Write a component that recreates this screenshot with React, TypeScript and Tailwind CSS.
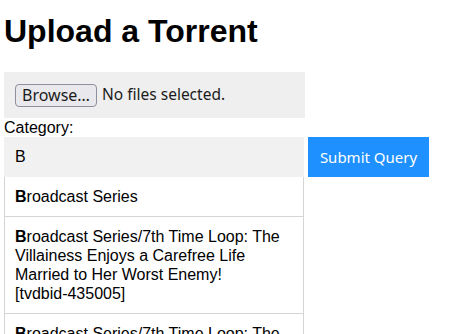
const rest = "roadcast Series/7th Time Loop: The Villainess Enjoys a Carefree Life Married to Her Worst Enemy! ";

const items = [
  <>roadcast Series</>,
  <>
    {rest}
    <span className="whitespace-nowrap">[tvdbid-435005]</span>
  </>,
  <>
    {rest}
    <span className="whitespace-nowrap">[tvdbid-435005]/Season</span> 1
  </>,
];

export default function App() {
  return (
    <div className="h-[334px] w-[462px] overflow-hidden bg-white px-1 font-['Liberation_Sans',Arial,sans-serif] text-[16px] text-black">
      <h1 className="mt-[13px] mb-[22px] text-[32px] font-bold leading-[37px]">
        Upload a Torrent
      </h1>

      {/* file picker */}
      <div className="flex h-[46px] w-[301px] items-center gap-[5px] bg-[#efefef] px-[11px] font-['Noto_Sans',sans-serif] text-[15.5px]">
        <span className="flex h-[23px] w-[82px] items-center justify-center rounded-[4px] border border-[#8f8f9d] bg-[#e9e9ed] text-[16px] text-[#1b1b1b]">
          Browse…
        </span>
        <span className="text-[#1b1b1b]">No files selected.</span>
      </div>

      <div className="leading-[19px]">Category:</div>

      <div className="flex items-start gap-1">
        <div className="w-[300px]">
          <div className="flex h-[40px] items-center border border-transparent bg-[#f1f1f1] px-[10px]">
            B
          </div>
          <div className="border-x border-[#d4d4d4]">
            {items.map((t, i) => (
              <div
                key={i}
                className="border-b border-[#d4d4d4] bg-white p-[10px] leading-[19px]"
              >
                <strong>B</strong>
                {t}
              </div>
            ))}
          </div>
        </div>
        <div className="flex h-[40px] w-[121px] items-center justify-center bg-[#1e90ff] font-['Noto_Sans',sans-serif] text-[15px] text-white">
          Submit Query
        </div>
      </div>
    </div>
  );
}
